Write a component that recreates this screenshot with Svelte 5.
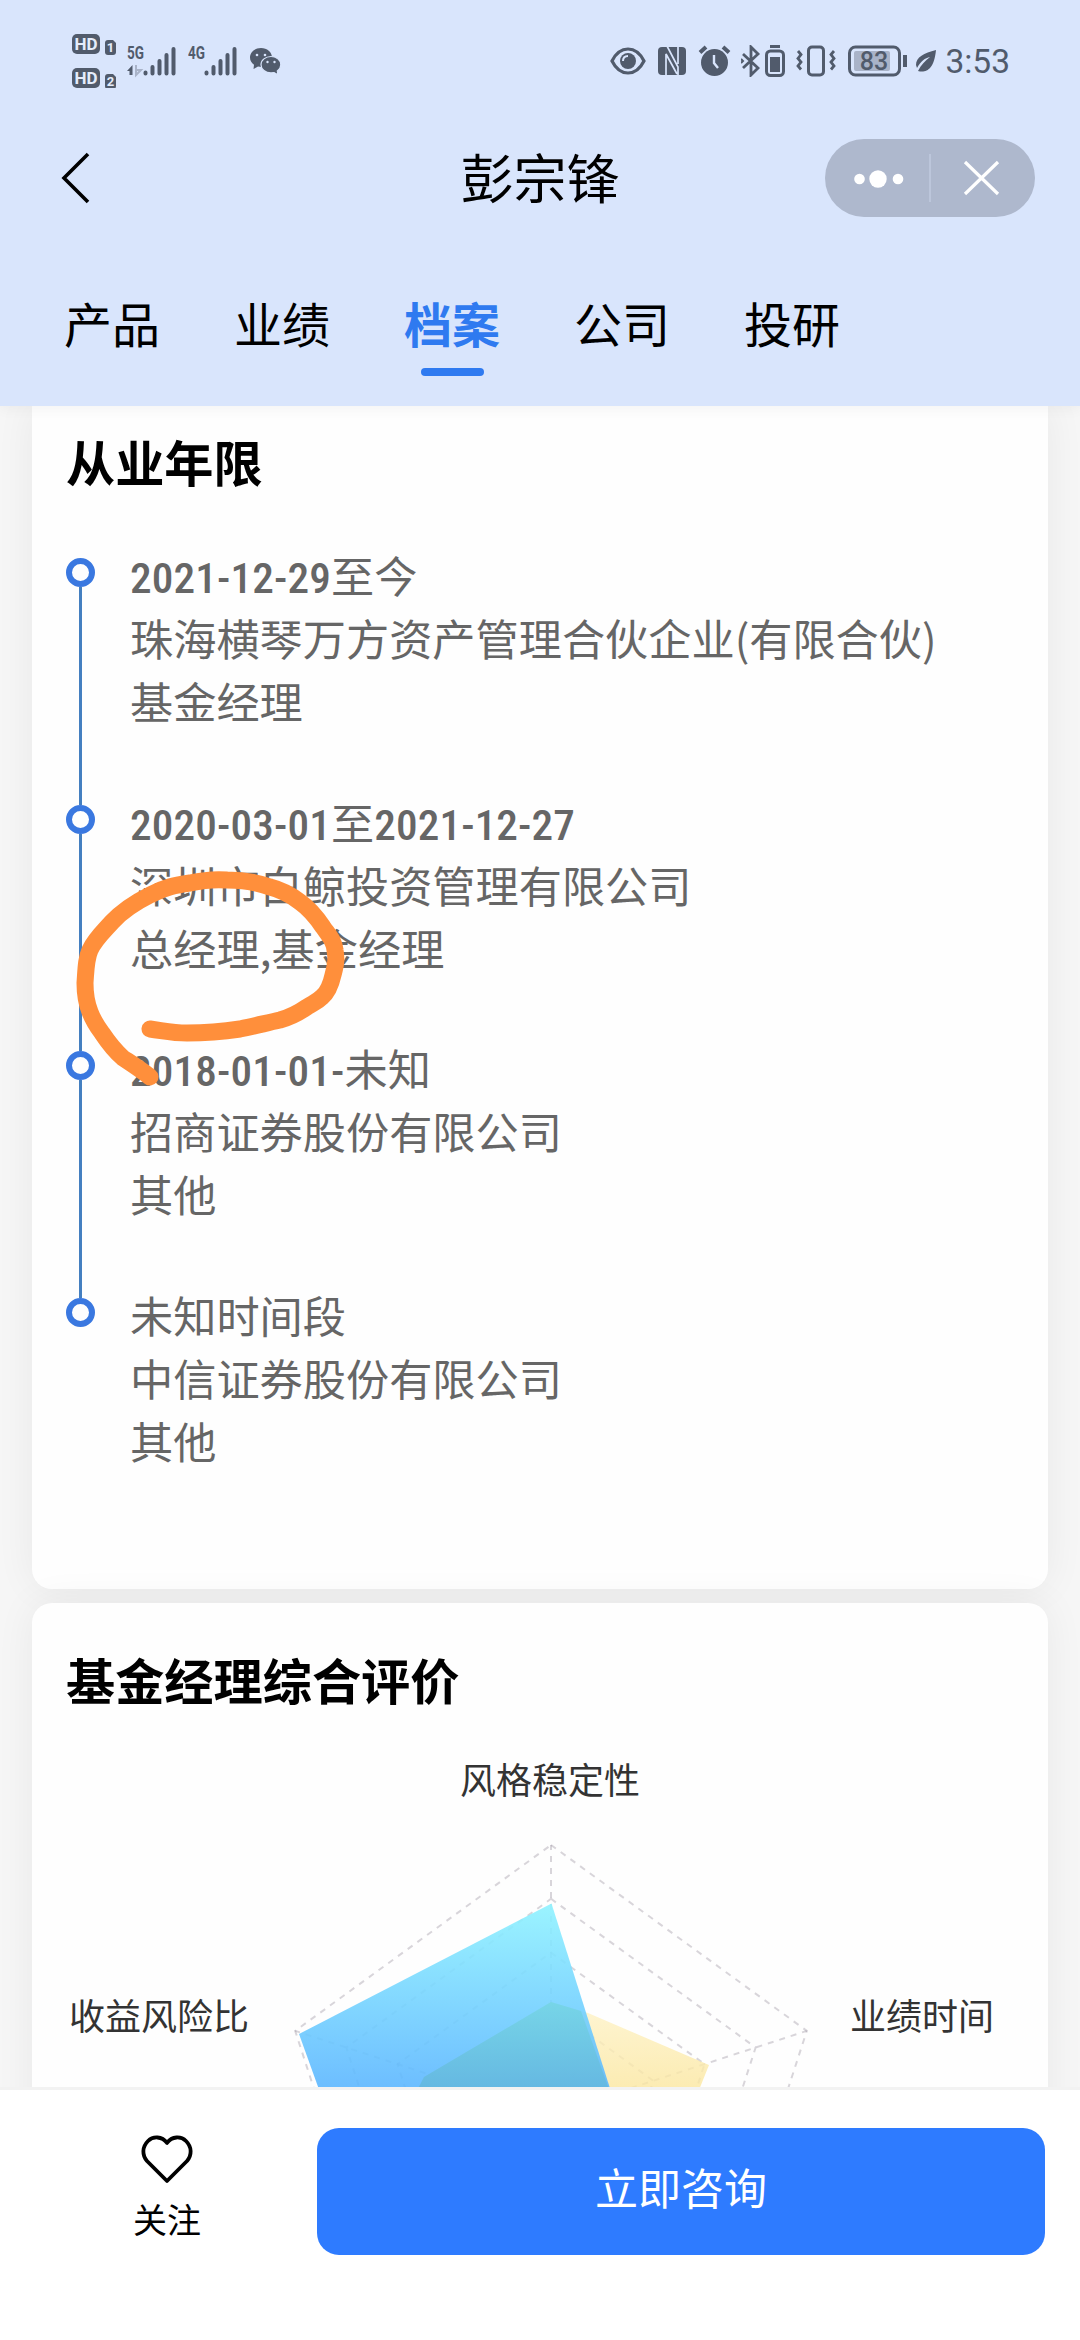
<script>
	const tabs = ['产品', '业绩', '档案', '公司', '投研'];
	let activeTab = '档案';

	const jobs = [
		{
			period: ['2021-12-29', '至今'],
			company: '珠海横琴万方资产管理合伙企业(有限合伙)',
			role: '基金经理'
		},
		{
			period: ['2020-03-01', '至', '2021-12-27'],
			company: '深圳市白鲸投资管理有限公司',
			role: '总经理,基金经理'
		},
		{ period: ['2018-01-01-', '未知'], company: '招商证券股份有限公司', role: '其他' },
		{ period: ['未知时间段'], company: '中信证券股份有限公司', role: '其他' }
	];

	// radar chart geometry
	const cx = 519;
	const cy = 294;
	const radius = 269;
	const angles = [0, 1, 2, 3, 4].map((i) => (i * 72 * Math.PI) / 180);
	const rings = [1, 0.8, 0.6, 0.4, 0.2].map((r) => angles.map((a) => point(a, r)).join(' '));
	const spokes = angles.map((a) => point(a, 1));

	function point(angle, ratio) {
		return [cx + radius * ratio * Math.sin(angle), cy - radius * ratio * Math.cos(angle)];
	}

	function isNumeric(part) {
		return /^\d/.test(part);
	}
</script>

<div class="screen">
	<header>
		<div class="status">
			<svg class="hd" width="44" height="54" viewBox="0 0 44 54">
				<rect width="28" height="20" rx="5" />
				<text x="14" y="16" class="knock" font-size="17" text-anchor="middle">HD</text>
				<path d="M33 9q0-3 3-3h5l3 3v9q0 3-3 3h-5q-3 0-3-3z" />
				<text x="38.5" y="18" class="knock" font-size="13" text-anchor="middle">1</text>
				<rect y="34" width="28" height="20" rx="5" />
				<text x="14" y="50" class="knock" font-size="17" text-anchor="middle">HD</text>
				<path d="M33 43q0-3 3-3h5l3 3v9q0 3-3 3h-5q-3 0-3-3z" />
				<text x="38.5" y="52" class="knock" font-size="13" text-anchor="middle">2</text>
			</svg>
			{#each ['5G', '4G'] as network}
				<svg class="signal" width="50" height="42" viewBox="0 -5 50 42">
					<text x="0" y="14" font-size="19" font-weight="700" textLength="17" lengthAdjust="spacingAndGlyphs">{network}</text>
					{#if network === '5G'}
						<path d="M5.500 30V20L0 26h2.500v4z" />
						<path d="M9 20v10l5-5h-4" fill="none" stroke="#a9b3c8" stroke-width="2" />
					{/if}
					<path d="M18.500 27.500v1M25.500 22v6.500M32.500 16v12.500M39.500 10v18.500M46.500 4v24.500" class="bars" />
				</svg>
			{/each}
			<svg class="wechat" width="31" height="27" viewBox="0 0 31 27">
				<path d="M11 0C4.500 0 0 4.500 0 9.500c0 3 1.500 5.500 4 7.300L3.500 21l4.500-2.400 3.500.5C18 19 22 15 22 9.500S17 0 11 0z" />
				<path d="M21 8.500c-5.500 0-10 3.600-10 8.200s4.500 8.200 10 8.200l3-.4 4 2.300-.7-3.800c2-1.500 3.500-3.700 3.500-6.300 0-4.600-4.500-8.200-9.800-8.200z" stroke="#d9e5fc" stroke-width="1.200" />
				<g fill="#d9e5fc">
					<circle cx="7" cy="7" r="1.300" />
					<circle cx="15" cy="7" r="1.300" />
					<circle cx="17.500" cy="14" r="1.200" />
					<circle cx="24.500" cy="14" r="1.200" />
				</g>
			</svg>

			<div class="right">
				<svg width="36" height="30" viewBox="0 0 36 30">
					<path d="M2 15C6 7 11 3 18 3s12 4 16 12c-4 8-9 12-16 12S6 23 2 15z" class="line" stroke-width="3.200" />
					<circle cx="18" cy="15" r="8" />
					<path d="M13 15q0-5 5-5" fill="none" stroke="#d9e5fc" stroke-width="2" />
				</svg>
				<svg class="nfc" width="28" height="30" viewBox="0 0 28 30">
					<rect y="1" width="28" height="28" rx="4" />
					<path d="M8 30V8l11 20M9 0l11 21v8M20 0v18" fill="none" stroke="#d9e5fc" stroke-width="1.700" />
				</svg>
				<svg class="alarm" width="33" height="32" viewBox="0 0 33 32">
					<circle cx="16.500" cy="17.500" r="13.500" />
					<path d="M2 7.500L8 2M25 2l6 5.500" class="line" stroke-width="4" />
					<path d="M16 10v8l4 5" fill="none" stroke="#d9e5fc" stroke-width="2.400" />
				</svg>
				<svg class="bluetooth" width="20" height="32" viewBox="0 0 20 32">
					<path d="M2 9l15 14-7 7V2l7 7L2 23" class="line" stroke-width="2.800" />
					<path d="M0 14l2 2-2 2" class="line" stroke-width="2" />
				</svg>
				<svg class="cell" width="20" height="32" viewBox="0 0 20 32">
					<path d="M5 1.500h10" class="line" stroke-width="3" />
					<rect x="1.500" y="6" width="17" height="24.500" rx="4" class="line" stroke-width="3" />
					<rect x="5" y="12" width="10" height="15" />
				</svg>
				<svg class="vibrate" width="40" height="32" viewBox="0 0 40 32">
					<rect x="12.500" y="2" width="15" height="28" rx="3.500" class="line" stroke-width="3" />
					<path d="M2 6l3 3.500-3 4 3 3.500-3 4 3 3.500M38 6l-3 3.500 3 4-3 3.500 3 4-3 3.500" class="line" stroke-width="2.800" />
				</svg>
				<svg class="battery" width="60" height="32" viewBox="0 0 60 32">
					<rect x="1.500" y="2" width="50" height="28" rx="6" class="line" stroke-width="3" />
					<rect x="6" y="6" width="36" height="20" rx="2" fill="#a9b3c8" />
					<text x="26" y="24.500" font-size="25" text-anchor="middle" font-weight="500">83</text>
					<path d="M57 10v12" class="line" stroke-width="4" />
				</svg>
				<svg class="leaf" width="22" height="24" viewBox="0 0 22 24">
					<path d="M21 1C9 4 1 8 1 16l1 3C6 12 10 9 15 8 10 12 6 16 3 22c8 2 16-1 18-21z" />
				</svg>
				<span class="time">3:53</span>
			</div>
		</div>

		<div class="nav">
			<svg class="back" width="32" height="56" viewBox="0 0 32 56">
				<path d="M28 4L4 28l24 24" fill="none" stroke="#000" stroke-width="3.600" />
			</svg>
			<h1>彭宗锋</h1>
			<div class="capsule">
				<svg width="104" height="78" viewBox="0 0 104 78">
					<circle cx="34.500" cy="40" r="5.300" />
					<circle cx="53" cy="40" r="8.700" />
					<circle cx="73" cy="40" r="5.300" />
				</svg>
				<i></i>
				<svg width="104" height="78" viewBox="0 0 104 78">
					<path d="M34 23l33 32M67 23L34 55" stroke="#fff" stroke-width="3.200" />
				</svg>
			</div>
		</div>

		<nav class="tabs">
			{#each tabs as tab}
				<button class="tab" class:active={tab === activeTab} on:click={() => (activeTab = tab)}>
					{tab}
				</button>
			{/each}
		</nav>
	</header>

	<main>
		<section class="card career">
			<h2>从业年限</h2>
			<ul>
				{#each jobs as job}
					<li>
						<div class="rail"><span class="dot"></span></div>
						<div class="job">
							<p>
								{#each job.period as part}<span class:num={isNumeric(part)}>{part}</span>{/each}
							</p>
							<p>{job.company}</p>
							<p>{job.role}</p>
						</div>
					</li>
				{/each}
			</ul>
			<svg class="scribble" width="290" height="240" viewBox="70 860 290 240">
				<path
					d="M150 1077C140 1069 132 1064 123 1058C114 1050 108 1042 102 1033C96 1025 93 1020 90 1012C86 1002 85 993 85 983C86 969 86 959 90 950C95 939 104 931 112 922C124 909 136 902 150 895C165 887 176 885 190 883C204 880 215 879 227 880C243 880 256 882 270 887C282 890 291 895 300 902C310 909 317 918 323 927C330 937 334 941 335 950C337 961 335 967 333 975C331 984 328 992 322 997C317 1002 313 1003 307 1007C297 1014 291 1017 280 1020C266 1023 255 1026 240 1029C220 1032 205 1033 187 1033C173 1033 165 1031 150 1029"
				/>
			</svg>
		</section>

		<section class="card rating">
			<h2>基金经理综合评价</h2>
			<svg class="radar" width="1016" height="400" viewBox="0 0 1016 400">
				<defs>
					<linearGradient id="manager" gradientUnits="userSpaceOnUse" x1="0" y1="83" x2="0" y2="267">
						<stop offset="0" stop-color="#90f3ff" />
						<stop offset="1" stop-color="#5db7ff" />
					</linearGradient>
					<linearGradient id="average" gradientUnits="userSpaceOnUse" x1="0" y1="182" x2="0" y2="267">
						<stop offset="0" stop-color="#fef3c9" />
						<stop offset="1" stop-color="#fbe7a0" />
					</linearGradient>
					<linearGradient id="shared" gradientUnits="userSpaceOnUse" x1="0" y1="182" x2="0" y2="267">
						<stop offset="0" stop-color="#75d5e4" />
						<stop offset="1" stop-color="#64b8de" />
					</linearGradient>
				</defs>
				<g class="grid">
					{#each rings as ring}
						<polygon points={ring} />
					{/each}
					{#each spokes as [x, y]}
						<line x1={cx} y1={cy} x2={x} y2={y} />
					{/each}
				</g>
				<polygon points="519,182 556,193 677,245 655,300 370,300 392,257" fill="url(#average)" opacity="0.8" />
				<polygon points="519.500,83.500 267,214 298,300 588,300" fill="url(#manager)" opacity="0.9" />
				<polygon points="519,182 549,191 588,300 370,300 392,257" fill="url(#shared)" opacity="0.85" />
				<text x="518" y="-26" text-anchor="middle">风格稳定性</text>
				<text x="37" y="210">收益风险比</text>
				<text x="818" y="210">业绩时间</text>
			</svg>
		</section>
	</main>

	<footer>
		<div class="follow">
			<svg width="54" height="50" viewBox="0 0 54 50">
				<path d="M27 8C22 1 13 1 8 6 2 12 2 20 7 26L27 46 47 26C52 20 52 12 46 6 41 1 32 1 27 8z" fill="none" stroke="#000" stroke-width="3.800" stroke-linejoin="round" />
			</svg>
			<span>关注</span>
		</div>
		<button class="consult">立即咨询</button>
	</footer>
</div>

<style>
	:global(body) {
		background: #f6f6f6;
	}

	.screen {
		width: 1080px;
		height: 2340px;
		overflow: hidden;
		display: flex;
		flex-direction: column;
		font-family: 'Noto Sans CJK SC', sans-serif;
		color: #000;
	}

	h1,
	h2,
	p,
	ul {
		margin: 0;
		padding: 0;
		list-style: none;
	}

	button {
		border: 0;
		padding: 0;
		background: none;
		font-family: inherit;
		color: inherit;
	}

	svg {
		display: block;
		flex: none;
	}

	header {
		flex: none;
		height: 406px;
		background: #d9e5fc;
		box-shadow: 0 2px 14px rgba(0, 0, 0, 0.05);
		z-index: 1;
	}

	.status {
		display: flex;
		align-items: center;
		height: 122px;
		padding: 0 70px 0 72px;
		fill: #515b6c;
		color: #515b6c;
		font-family: Roboto, sans-serif;
	}

	.knock {
		fill: #e4ecfb;
		font-weight: 700;
	}

	.signal {
		margin-left: 11px;
	}

	.bars {
		stroke: #515b6c;
		stroke-width: 4;
		stroke-linecap: round;
	}

	.wechat {
		margin-left: 12px;
	}

	.line {
		fill: none;
		stroke: #515b6c;
	}

	.right {
		display: flex;
		align-items: center;
		margin-left: auto;
	}

	.nfc,
	.alarm {
		margin-left: 12px;
	}

	.bluetooth {
		margin-left: 10px;
	}

	.cell {
		margin-left: 4px;
	}

	.vibrate {
		margin-left: 11px;
	}

	.battery {
		margin-left: 12px;
	}

	.leaf {
		margin-left: 7px;
	}

	.time {
		margin-left: 8px;
		padding-top: 2px;
		font-size: 33.500px;
		line-height: 40px;
	}

	.nav {
		display: grid;
		grid-template-columns: 210px 1fr 210px;
		align-items: center;
		height: 112px;
		padding: 0 45px 0 60px;
	}

	h1 {
		font-size: 53px;
		line-height: 70px;
		font-weight: 400;
		text-align: center;
		padding: 0 15px 4px 0;
	}

	.capsule {
		display: flex;
		align-items: center;
		height: 78px;
		border-radius: 39px;
		background: #aeb8cd;
		fill: #fff;
	}

	.capsule i {
		width: 2px;
		height: 48px;
		background: #bcc6db;
	}

	.tabs {
		display: flex;
		align-items: flex-start;
		padding: 57px 0 0 27px;
	}

	.tab {
		width: 170px;
		font-size: 48px;
		line-height: 62px;
	}

	.tab.active {
		color: #2f7af0;
		font-weight: 700;
	}

	.tab.active::after {
		content: '';
		display: block;
		width: 63px;
		height: 8px;
		margin: 15px auto 0;
		border-radius: 4px;
		background: #2f7af0;
	}

	main {
		flex: 1;
		min-height: 0;
		overflow: hidden;
		padding: 0 32px;
		background: #f6f6f6;
	}

	.card {
		position: relative;
		box-sizing: border-box;
		border-radius: 20px;
		background: #fefefe;
		box-shadow: 0 0 40px rgba(0, 0, 0, 0.06);
	}

	.career {
		height: 1183px;
		padding: 22px 35px 0 33px;
		border-radius: 0 0 20px 20px;
	}

	h2 {
		padding-left: 1px;
		font-size: 49.200px;
		line-height: 66px;
		font-weight: 700;
	}

	ul {
		margin-top: 49px;
	}

	li {
		display: flex;
		height: 246.700px;
	}

	.rail {
		display: flex;
		flex-direction: column;
		align-items: center;
		width: 31px;
		padding-top: 15px;
		margin-bottom: -15px;
	}

	.dot {
		flex: none;
		box-sizing: border-box;
		width: 29px;
		height: 29px;
		border: 6px solid #3a78e0;
		border-radius: 50%;
	}

	li:not(:last-child) .rail::after {
		content: '';
		flex: 1;
		width: 3px;
		background: #447fc0;
	}

	.job {
		margin-left: 34px;
		color: #666;
		font-size: 43.200px;
		line-height: 63px;
	}

	.job p {
		height: 63px;
		white-space: nowrap;
	}

	.num {
		font-family: 'Liberation Sans Narrow', 'Roboto Condensed', Roboto, sans-serif;
		font-stretch: condensed;
		font-weight: 500;
		letter-spacing: 0.150px;
	}

	.scribble {
		position: absolute;
		left: 38px;
		top: 454px;
		fill: none;
		stroke: #ff8f3b;
		stroke-width: 17;
		stroke-linecap: round;
		stroke-linejoin: round;
	}

	.rating {
		height: 700px;
		margin-top: 14px;
		padding-top: 43px;
	}

	.rating h2 {
		padding-left: 34px;
	}

	.radar {
		margin-top: 108px;
		overflow: visible;
		font-size: 36px;
		fill: #333;
	}

	.grid {
		fill: none;
		stroke: #8a8090;
		stroke-opacity: 0.32;
		stroke-width: 2;
		stroke-dasharray: 6 6;
	}

	footer {
		flex: none;
		display: flex;
		box-sizing: border-box;
		height: 253px;
		padding: 38px 35px 0 32px;
		border-top: 3px solid #f2f2f2;
		background: #fff;
		z-index: 1;
	}

	.follow {
		display: flex;
		flex-direction: column;
		align-items: center;
		width: 270px;
		padding-top: 7px;
	}

	.follow span {
		margin-top: 9px;
		font-size: 34px;
		line-height: 50px;
	}

	.consult {
		flex: 1;
		height: 127px;
		margin-left: 15px;
		padding-bottom: 11px;
		border-radius: 22px;
		background: #2e7bff;
		color: #fff;
		font-size: 43px;
	}
</style>
